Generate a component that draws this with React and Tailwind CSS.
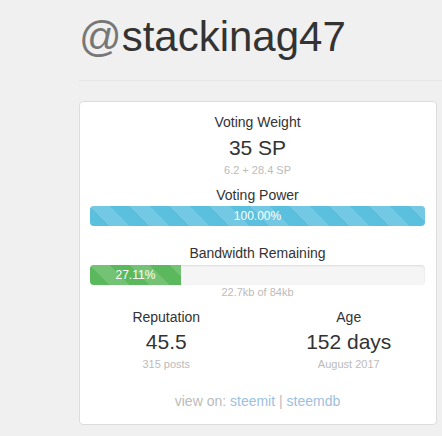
const stripes = {
  backgroundImage:
    "linear-gradient(45deg, rgba(255,255,255,.15) 25%, transparent 25%, transparent 50%, rgba(255,255,255,.15) 50%, rgba(255,255,255,.15) 75%, transparent 75%, transparent)",
  backgroundSize: "40px 40px",
};

const Bar = ({pct, color, label}) => (
  <div className="h-5 w-full overflow-hidden rounded bg-[#f5f5f5] shadow-[inset_0_1px_2px_rgba(0,0,0,0.1)]">
    <div
      className={`flex h-full items-center justify-center text-[12px] text-white ${color}`}
      style={{...stripes, width: pct}}
    >
      {label}
    </div>
  </div>
);

export default function App() {
  return (
    <div className="min-h-screen bg-[#f0f0f0] pl-[79px] font-['Liberation_Sans',Arial,sans-serif] text-[#333]">
      <h1 className="pt-[14px] text-[42px] leading-[1.1]">
        <span className="text-[#777]">@</span>stackinag47
      </h1>
      <hr className="mt-[20px] border-t border-[#e6e6e6]" />
      <div className="mt-[20px] w-[358px] rounded border border-[#ddd] bg-white pb-[13px] pl-[10px] pr-[11px] pt-[10px] text-center">
        <div className="text-[14px] leading-[20px]">Voting Weight</div>
        <div className="mt-px text-[21px] leading-[30px]">35 SP</div>
        <div className="text-[11px] leading-[14px] text-[#bbb]">6.2 + 28.4 SP</div>
        <div className="mt-[8px] text-[14px] leading-[20px]">Voting Power</div>
        <div className="mt-px">
          <Bar pct="100%" color="bg-[#5bc0de]" label="100.00%" />
        </div>
        <div className="mt-[17px] text-[14px] leading-[20px]">Bandwidth Remaining</div>
        <div className="mt-[2px]">
          <Bar pct="27.11%" color="bg-[#5cb85c]" label="27.11%" />
        </div>
        <div className="text-[11px] leading-[14px] text-[#bbb]">22.7kb of 84kb</div>
        <div className="mx-[-15px] mt-[8px] grid grid-cols-2">
          <div>
            <div className="text-[14px] leading-[20px]">Reputation</div>
            <div className="text-[21px] leading-[30px]">45.5</div>
            <div className="text-[11px] leading-[14px] text-[#bbb]">315 posts</div>
          </div>
          <div>
            <div className="text-[14px] leading-[20px]">Age</div>
            <div className="text-[21px] leading-[30px]">152 days</div>
            <div className="text-[11px] leading-[14px] text-[#bbb]">August 2017</div>
          </div>
        </div>
        <div className="mt-[20px] text-[14px] leading-[20px] text-[#bbb]">
          view on: <a className="text-[#9dbfdf]">steemit</a> | <a className="text-[#9dbfdf]">steemdb</a>
        </div>
      </div>
    </div>
  );
}
